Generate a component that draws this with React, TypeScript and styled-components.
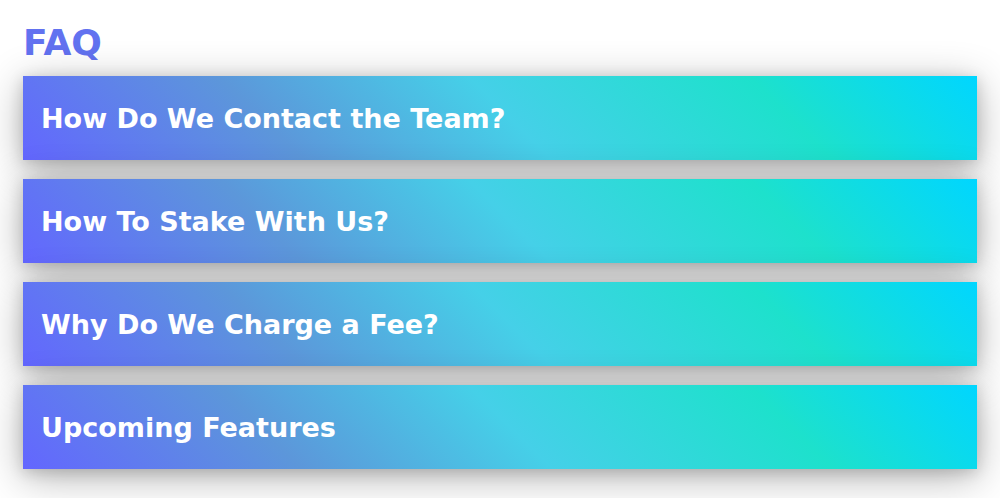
import React from "react";
import styled, { createGlobalStyle } from "styled-components";

const GlobalStyle = createGlobalStyle`
  html, body {
    margin: 0;
    padding: 0;
    background: #ffffff;
  }
  body {
    font-family: "DejaVu Sans", "Verdana", sans-serif;
  }
`;

const Page = styled.div`
  padding: 20px 23px 30px 23px;
  display: flex;
  flex-direction: column;
`;

const Title = styled.h1`
  margin: 0 0 11px 0;
  font-family: "DejaVu Sans", sans-serif;
  font-weight: 700;
  font-size: 36px;
  line-height: 45px;
  color: #6272f0;
`;

const List = styled.div`
  display: flex;
  flex-direction: column;
  gap: 19px;
`;

const Item = styled.button`
  all: unset;
  box-sizing: border-box;
  display: flex;
  align-items: center;
  height: 84px;
  padding: 0 18px;
  cursor: pointer;
  background: linear-gradient(
    45deg,
    #6366ff 0%,
    #5c97da 27%,
    #45d0e8 51%,
    #1de1cc 78%,
    #00d6ff 100%
  );
  box-shadow: 0 8px 42px rgba(0, 0, 0, 0.3), 0 3px 14px rgba(0, 0, 0, 0.16);
`;

const Question = styled.span`
  font-family: "DejaVu Sans", sans-serif;
  font-weight: 700;
  font-size: 27px;
  color: #ffffff;
`;

const questions = [
  "How Do We Contact the Team?",
  "How To Stake With Us?",
  "Why Do We Charge a Fee?",
  "Upcoming Features",
];

export default function App() {
  return (
    <>
      <GlobalStyle />
      <Page>
        <Title>FAQ</Title>
        <List>
          {questions.map((q) => (
            <Item key={q} type="button">
              <Question>{q}</Question>
            </Item>
          ))}
        </List>
      </Page>
    </>
  );
}
